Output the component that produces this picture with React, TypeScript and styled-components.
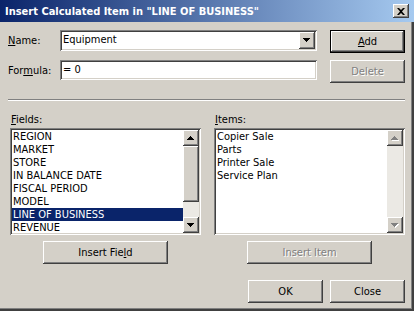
import * as React from "react";
import styled, { createGlobalStyle, css } from "styled-components";

const GlobalStyle = createGlobalStyle`
  body {
    margin: 0;
    font-family: "DejaVu Sans Condensed", "DejaVu Sans", sans-serif;
    font-size: 11px;
  }
`;

const FIELDS = [
  "REGION",
  "MARKET",
  "STORE",
  "IN BALANCE DATE",
  "FISCAL PERIOD",
  "MODEL",
  "LINE OF BUSINESS",
  "REVENUE",
];

const ITEMS = ["Copier Sale", "Parts", "Printer Sale", "Service Plan"];

const raised = css`
  background: #d4d0c8;
  box-shadow: inset -1px -1px #404040, inset 1px 1px #fff,
    inset -2px -2px #808080, inset 2px 2px #d4d0c8;
`;

const sunken = css`
  background: #fff;
  box-shadow: inset 1px 1px #808080, inset -1px -1px #fff,
    inset 2px 2px #404040, inset -2px -2px #d4d0c8;
`;

const Arrow = ({ dir, disabled }: { dir: "up" | "down"; disabled?: boolean }) => {
  const d =
    dir === "up"
      ? "M3 0h1v1h1v1h1v1h1v1H0V3h1V2h1V1h1z"
      : "M0 0h7v1H6v1H5v1H4v1H3V3H2V2H1V1H0z";
  return (
    <svg width="8" height="5" viewBox="0 0 8 5">
      {disabled && <path d={d} fill="#fff" transform="translate(1 1)" />}
      <path d={d} fill={disabled ? "#808080" : "#000"} />
    </svg>
  );
};

export default function App() {
  return (
    <>
      <GlobalStyle />
      <Window>
        <TitleBar>
          <Title>Insert Calculated Item in "LINE OF BUSINESS"</Title>
          <CloseBox>
            <svg width="8" height="7" viewBox="0 0 8 7">
              <path
                d="M0 0h2l2 2 2-2h2L5 3.5 8 7H6L4 5 2 7H0l3-3.5z"
                fill="#000"
              />
            </svg>
          </CloseBox>
        </TitleBar>
        <Body>
          <TopGrid>
            <Label>
              <U>N</U>ame:
            </Label>
            <Combo>
              <FieldText>Equipment</FieldText>
              <DropButton>
                <Arrow dir="down" />
              </DropButton>
            </Combo>
            <Button $default>
              <U>A</U>dd
            </Button>
            <Label>
              For<U>m</U>ula:
            </Label>
            <TextBox>
              <FieldText>= 0</FieldText>
            </TextBox>
            <Button disabled>Delete</Button>
          </TopGrid>
          <Separator />
          <ListsGrid>
            <Column>
              <ListLabel>
                <U>F</U>ields:
              </ListLabel>
              <ListBox>
                <Rows>
                  {FIELDS.map((f, i) => (
                    <Row key={f} $selected={i === 6}>
                      {f}
                    </Row>
                  ))}
                </Rows>
                <ScrollBar>
                  <ScrollButton>
                    <Arrow dir="up" />
                  </ScrollButton>
                  <Thumb />
                  <Track />
                  <ScrollButton>
                    <Arrow dir="down" />
                  </ScrollButton>
                </ScrollBar>
              </ListBox>
              <WideButton>
                Insert Fie<U>l</U>d
              </WideButton>
            </Column>
            <Column>
              <ListLabel>
                <U>I</U>tems:
              </ListLabel>
              <ListBox>
                <Rows>
                  {ITEMS.map((it) => (
                    <Row key={it}>{it}</Row>
                  ))}
                </Rows>
                <ScrollBar>
                  <ScrollButton>
                    <Arrow dir="up" disabled />
                  </ScrollButton>
                  <Track />
                  <ScrollButton>
                    <Arrow dir="down" disabled />
                  </ScrollButton>
                </ScrollBar>
              </ListBox>
              <WideButton disabled>Insert Item</WideButton>
            </Column>
          </ListsGrid>
          <Footer>
            <Button>OK</Button>
            <Button>Close</Button>
          </Footer>
        </Body>
      </Window>
    </>
  );
}

// styled components
const Window = styled.div`
  position: relative;
  width: 414px;
  height: 311px;
  box-sizing: border-box;
  background: #d4d0c8;
  box-shadow: inset -1px -1px #404040, inset -2px -2px #404040,
    inset -3px -3px #808080;
  color: #000;
  overflow: hidden;
`;

const TitleBar = styled.div`
  display: flex;
  align-items: center;
  justify-content: space-between;
  height: 22px;
  padding: 0 5px 0 5px;
  background: linear-gradient(to right, #0a246a, #a6caf0);
`;

const Title = styled.div`
  color: #fff;
  font-weight: bold;
  font-size: 11px;
  white-space: nowrap;
`;

const CloseBox = styled.div`
  ${raised};
  display: flex;
  align-items: center;
  justify-content: center;
  width: 16px;
  height: 14px;
`;

const Body = styled.div`
  display: flex;
  flex-direction: column;
  padding: 8px 9px 0 8px;
`;

const TopGrid = styled.div`
  display: grid;
  grid-template-columns: 52px 257px 1fr;
  grid-auto-rows: 23px;
  row-gap: 7px;
  align-items: start;
`;

const Label = styled.div`
  line-height: 21px;
  white-space: nowrap;
`;

const U = styled.span`
  text-decoration: underline;
`;

const Combo = styled.div`
  ${sunken};
  display: flex;
  align-items: stretch;
  height: 21px;
  box-sizing: border-box;
  padding: 2px;
`;

const TextBox = styled.div`
  ${sunken};
  display: flex;
  height: 20px;
  box-sizing: border-box;
  padding: 2px;
`;

const FieldText = styled.div`
  flex: 1;
  padding-left: 1px;
  line-height: 16px;
`;

const DropButton = styled.div`
  ${raised};
  display: flex;
  align-items: center;
  justify-content: center;
  width: 16px;
`;

const Button = styled.button<{ $default?: boolean }>`
  ${raised};
  justify-self: end;
  width: 75px;
  height: 23px;
  box-sizing: border-box;
  padding: 0;
  border: ${(p) => (p.$default ? "1px solid #000" : "none")};
  font: inherit;
  color: #000;
  &:disabled {
    color: #808080;
    text-shadow: 1px 1px #fff;
  }
`;

const WideButton = styled(Button)`
  align-self: center;
  width: 125px;
  margin-top: 6px;
`;

const Separator = styled.div`
  margin-top: 16px;
  height: 0;
  border-top: 1px solid #808080;
  border-bottom: 1px solid #fff;
`;

const ListsGrid = styled.div`
  display: grid;
  grid-template-columns: 191px 191px;
  column-gap: 13px;
  margin-top: 12px;
  padding-left: 2px;
`;

const Column = styled.div`
  display: flex;
  flex-direction: column;
`;

const ListLabel = styled.div`
  line-height: 13px;
  margin-bottom: 2px;
  padding-left: 1px;
`;

const ListBox = styled.div`
  ${sunken};
  display: flex;
  height: 107px;
  box-sizing: border-box;
  padding: 2px;
  overflow: hidden;
`;

const Rows = styled.div`
  flex: 1;
  overflow: hidden;
`;

const Row = styled.div<{ $selected?: boolean }>`
  height: 13px;
  line-height: 13px;
  padding-left: 1px;
  white-space: nowrap;
  background: ${(p) => (p.$selected ? "#0a246a" : "transparent")};
  color: ${(p) => (p.$selected ? "#fff" : "#000")};
`;

const ScrollBar = styled.div`
  display: flex;
  flex-direction: column;
  width: 16px;
`;

const ScrollButton = styled.div`
  ${raised};
  display: flex;
  align-items: center;
  justify-content: center;
  height: 16px;
  flex: none;
`;

const Thumb = styled.div`
  ${raised};
  height: 56px;
  flex: none;
`;

const Track = styled.div`
  flex: 1;
  background: #ebe9e4;
`;

const Footer = styled.div`
  display: flex;
  justify-content: flex-end;
  gap: 7px;
  margin-top: 16px;
`;
